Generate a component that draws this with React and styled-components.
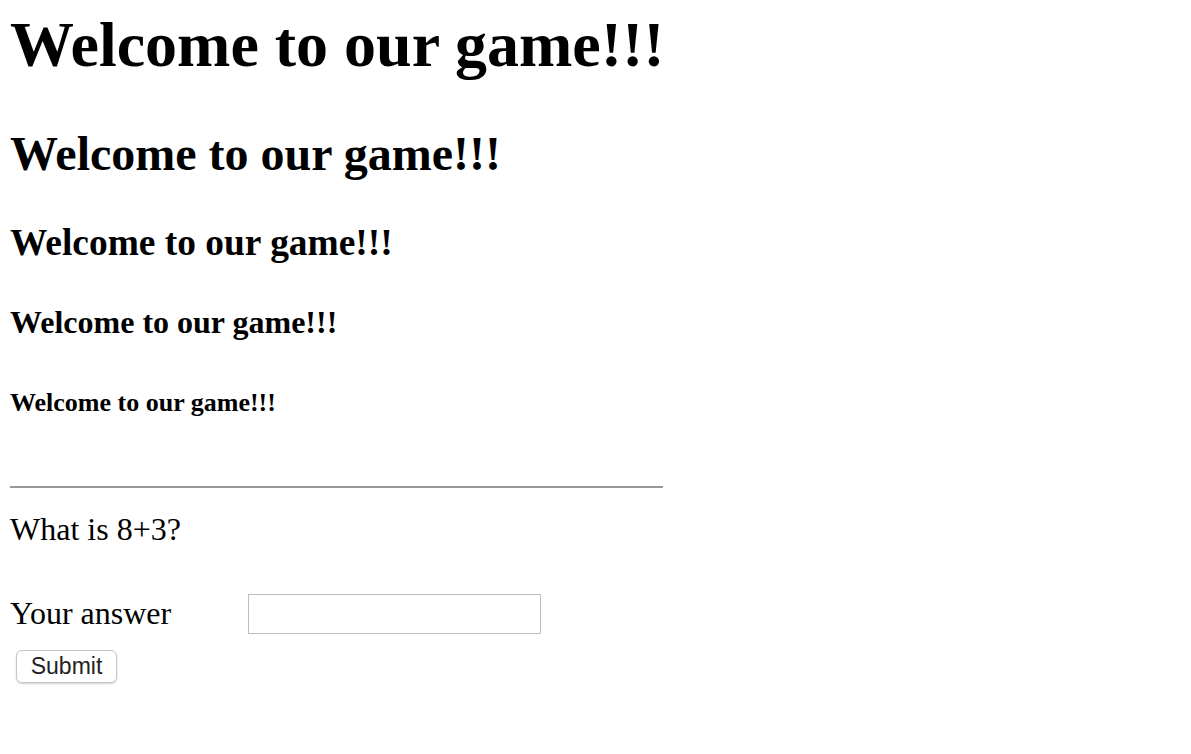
import React from 'react'
import styled, { createGlobalStyle } from 'styled-components'

const GlobalStyle = createGlobalStyle`
  body {
    margin: 0;
    background: #fff;
    color: #000;
    font-family: "Liberation Serif", "Times New Roman", serif;
    font-size: 32px;
  }
`

const Page = styled.div`
  width: 653px;
  padding: 8px 10px 40px;
`

// one heading style, size and spacing vary per level
const Heading = styled.h1`
  margin: ${props => props.$gap}px 0 0;
  font-size: ${props => props.$size}px;
  line-height: 1.15;
  font-weight: bold;
  white-space: nowrap;
`

const Rule = styled.hr`
  margin: 68px 0 0;
  height: 2px;
  border: none;
  background: #9a9a9a;
`

const Question = styled.p`
  margin: 23px 0 0;
  line-height: 1.15;
`

const AnswerRow = styled.div`
  display: grid;
  grid-template-columns: 238px 293px;
  align-items: center;
  margin-top: 46px;
  height: 40px;
`

const Label = styled.label`
  line-height: 1.15;
  white-space: nowrap;
`

const AnswerInput = styled.input`
  box-sizing: border-box;
  width: 293px;
  height: 40px;
  margin: 0;
  border: 1px solid #bdbdbd;
  border-radius: 0;
  outline: none;
  font-size: 21px;
  padding: 0 6px;
`

const SubmitButton = styled.button`
  box-sizing: border-box;
  display: block;
  margin: 16px 0 0 6px;
  width: 101px;
  height: 33px;
  padding: 1px 0 0;
  background: #fff;
  color: #222;
  border: 1px solid #c6c6c6;
  border-radius: 6px;
  box-shadow: 0 1px 2px rgba(0, 0, 0, 0.18);
  font-family: "Liberation Sans", Arial, sans-serif;
  font-size: 23px;
`

const headings = [
  { tag: 'h1', size: 64, gap: 0 },
  { tag: 'h2', size: 48, gap: 44.6 },
  { tag: 'h3', size: 37.44, gap: 39.4 },
  { tag: 'h4', size: 32, gap: 40.2 },
  { tag: 'h5', size: 26, gap: 47.1 },
]

export default function App() {
  return (
    <Page>
      <GlobalStyle />
      {headings.map(h => (
        <Heading key={h.tag} as={h.tag} $size={h.size} $gap={h.gap}>
          Welcome to our game!!!
        </Heading>
      ))}
      <Rule />
      <Question>What is 8+3?</Question>
      <form onSubmit={e => e.preventDefault()}>
        <AnswerRow>
          <Label htmlFor="answer">Your answer</Label>
          <AnswerInput id="answer" type="text" />
        </AnswerRow>
        <SubmitButton type="submit">Submit</SubmitButton>
      </form>
    </Page>
  )
}
